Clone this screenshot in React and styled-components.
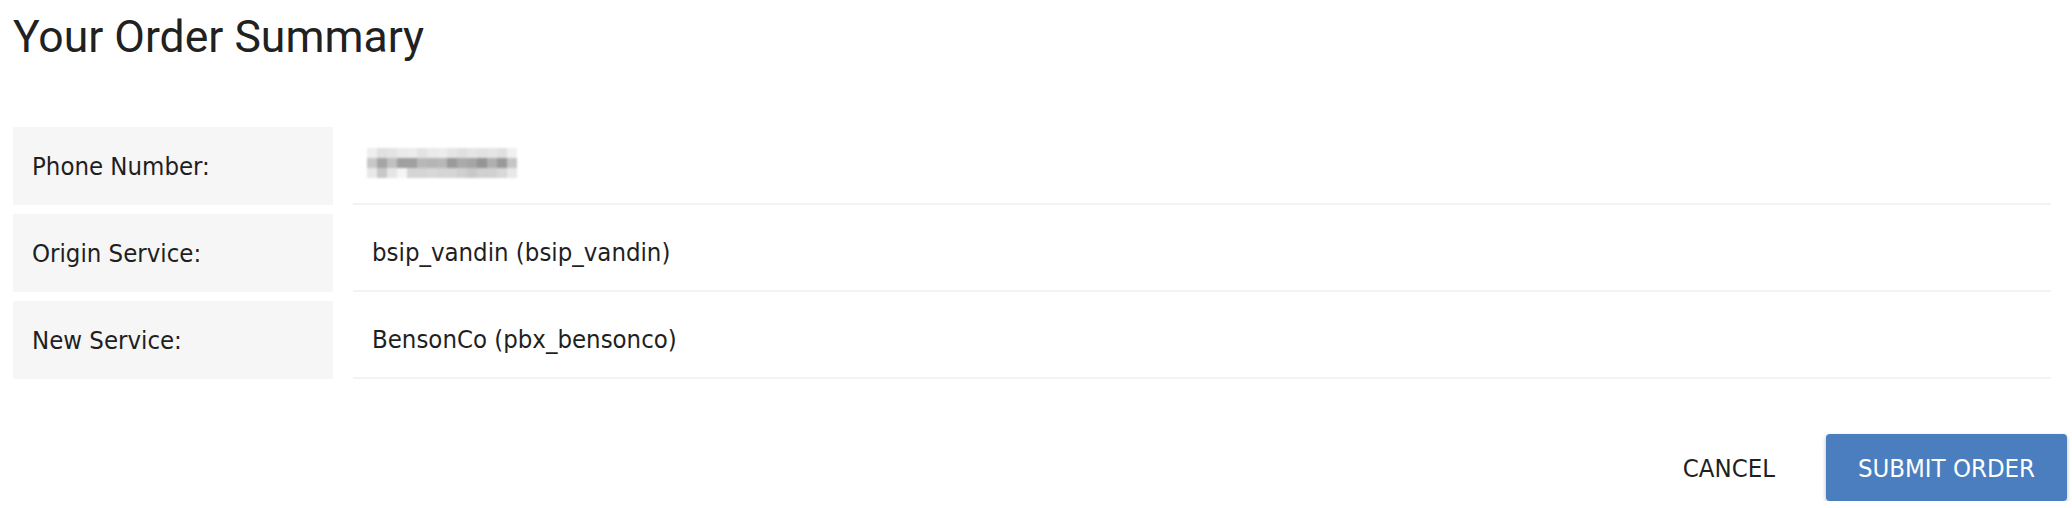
import React from "react";
import styled, { createGlobalStyle } from "styled-components";

const Global = createGlobalStyle`
  html, body { margin: 0; padding: 0; background: #fff; }
  body { font-family: "DejaVu Sans Condensed", "DejaVu Sans", sans-serif; color: #222; }
`;

const Page = styled.div`
  padding: 0 5px 0 13px;
  display: flex;
  flex-direction: column;
`;

const Title = styled.h1`
  margin: 0;
  padding-top: 15px;
  font-family: Roboto, "Liberation Sans", sans-serif;
  font-weight: 400;
  font-size: 44.5px;
  line-height: 45px;
  color: #212121;
`;

const Table = styled.div`
  margin-top: 67px;
  margin-right: 16px;
  display: grid;
  grid-template-columns: 320px 1fr;
  column-gap: 20px;
  row-gap: 9px;
`;

const Label = styled.div`
  height: 78px;
  background: #f6f6f6;
  display: flex;
  align-items: center;
  padding-left: 19px;
  font-size: 25.5px;
  color: #1f1f1f;
`;

const Value = styled.div`
  height: 78px;
  box-sizing: border-box;
  border-bottom: 2px solid #f3f3f3;
  display: flex;
  align-items: center;
  padding-left: 19px;
  font-size: 25.5px;
  color: #1f1f1f;
`;

const Pixelated = styled.div`
  display: grid;
  grid-template-columns: repeat(15, 10px);
  grid-template-rows: repeat(3, 10px);
  filter: blur(0.8px);
  margin-left: -5px;
  margin-top: -4px;
`;

const Pixel = styled.span`
  background: ${(p) => p.$shade};
`;

const Actions = styled.div`
  margin-top: 55px;
  display: flex;
  justify-content: flex-end;
  align-items: center;
  gap: 41px;
`;

const TextButton = styled.button`
  border: none;
  background: transparent;
  font-family: inherit;
  font-size: 25.5px;
  color: #1f1f1f;
  padding: 0 10px;
  height: 67px;
  cursor: pointer;
`;

const PrimaryButton = styled.button`
  border: none;
  background: #4a7ebe;
  color: #fff;
  font-family: inherit;
  font-size: 25.5px;
  height: 67px;
  padding: 0 32px;
  border-radius: 4px;
  box-shadow: 0 2px 4px rgba(0, 0, 0, 0.28);
  cursor: pointer;
`;

const shades = [
  ["#eee", "#e0e0e0", "#e3e3e3", "#eaeaea", "#ececec", "#e3e3e3", "#eaeaea", "#ececec", "#e5e5e5", "#e0e0e0", "#e5e5e5", "#e2e2e2", "#e5e5e5", "#e0e0e0", "#f0f0f0"],
  ["#c8c8c8", "#a5a5a5", "#c0c0c0", "#a0a0a0", "#a0a0a0", "#b8b8b8", "#b5b5b5", "#b8b8b8", "#9a9a9a", "#aaaaaa", "#a5a5a5", "#959595", "#b0b0b0", "#999999", "#c5c5c5"],
  ["#e8e8e8", "#c8c8c8", "#e5e5e5", "#f5f5f5", "#d5d5d5", "#d5d5d5", "#d8d8d8", "#d5d5d5", "#d5d5d5", "#cfcfcf", "#c8c8c8", "#d0d0d0", "#d0d0d0", "#d8d8d8", "#e8e8e8"],
];

const rows = [
  { label: "Phone Number:", value: null },
  { label: "Origin Service:", value: "bsip_vandin (bsip_vandin)" },
  { label: "New Service:", value: "BensonCo (pbx_bensonco)" },
];

export default function App() {
  return (
    <Page>
      <Global />
      <Title>Your Order Summary</Title>
      <Table>
        {rows.map((r) => (
          <React.Fragment key={r.label}>
            <Label>{r.label}</Label>
            <Value>
              {r.value ?? (
                <Pixelated aria-label="hidden phone number">
                  {shades.flat().map((s, i) => (
                    <Pixel key={i} $shade={s} />
                  ))}
                </Pixelated>
              )}
            </Value>
          </React.Fragment>
        ))}
      </Table>
      <Actions>
        <TextButton>CANCEL</TextButton>
        <PrimaryButton>SUBMIT ORDER</PrimaryButton>
      </Actions>
    </Page>
  );
}
